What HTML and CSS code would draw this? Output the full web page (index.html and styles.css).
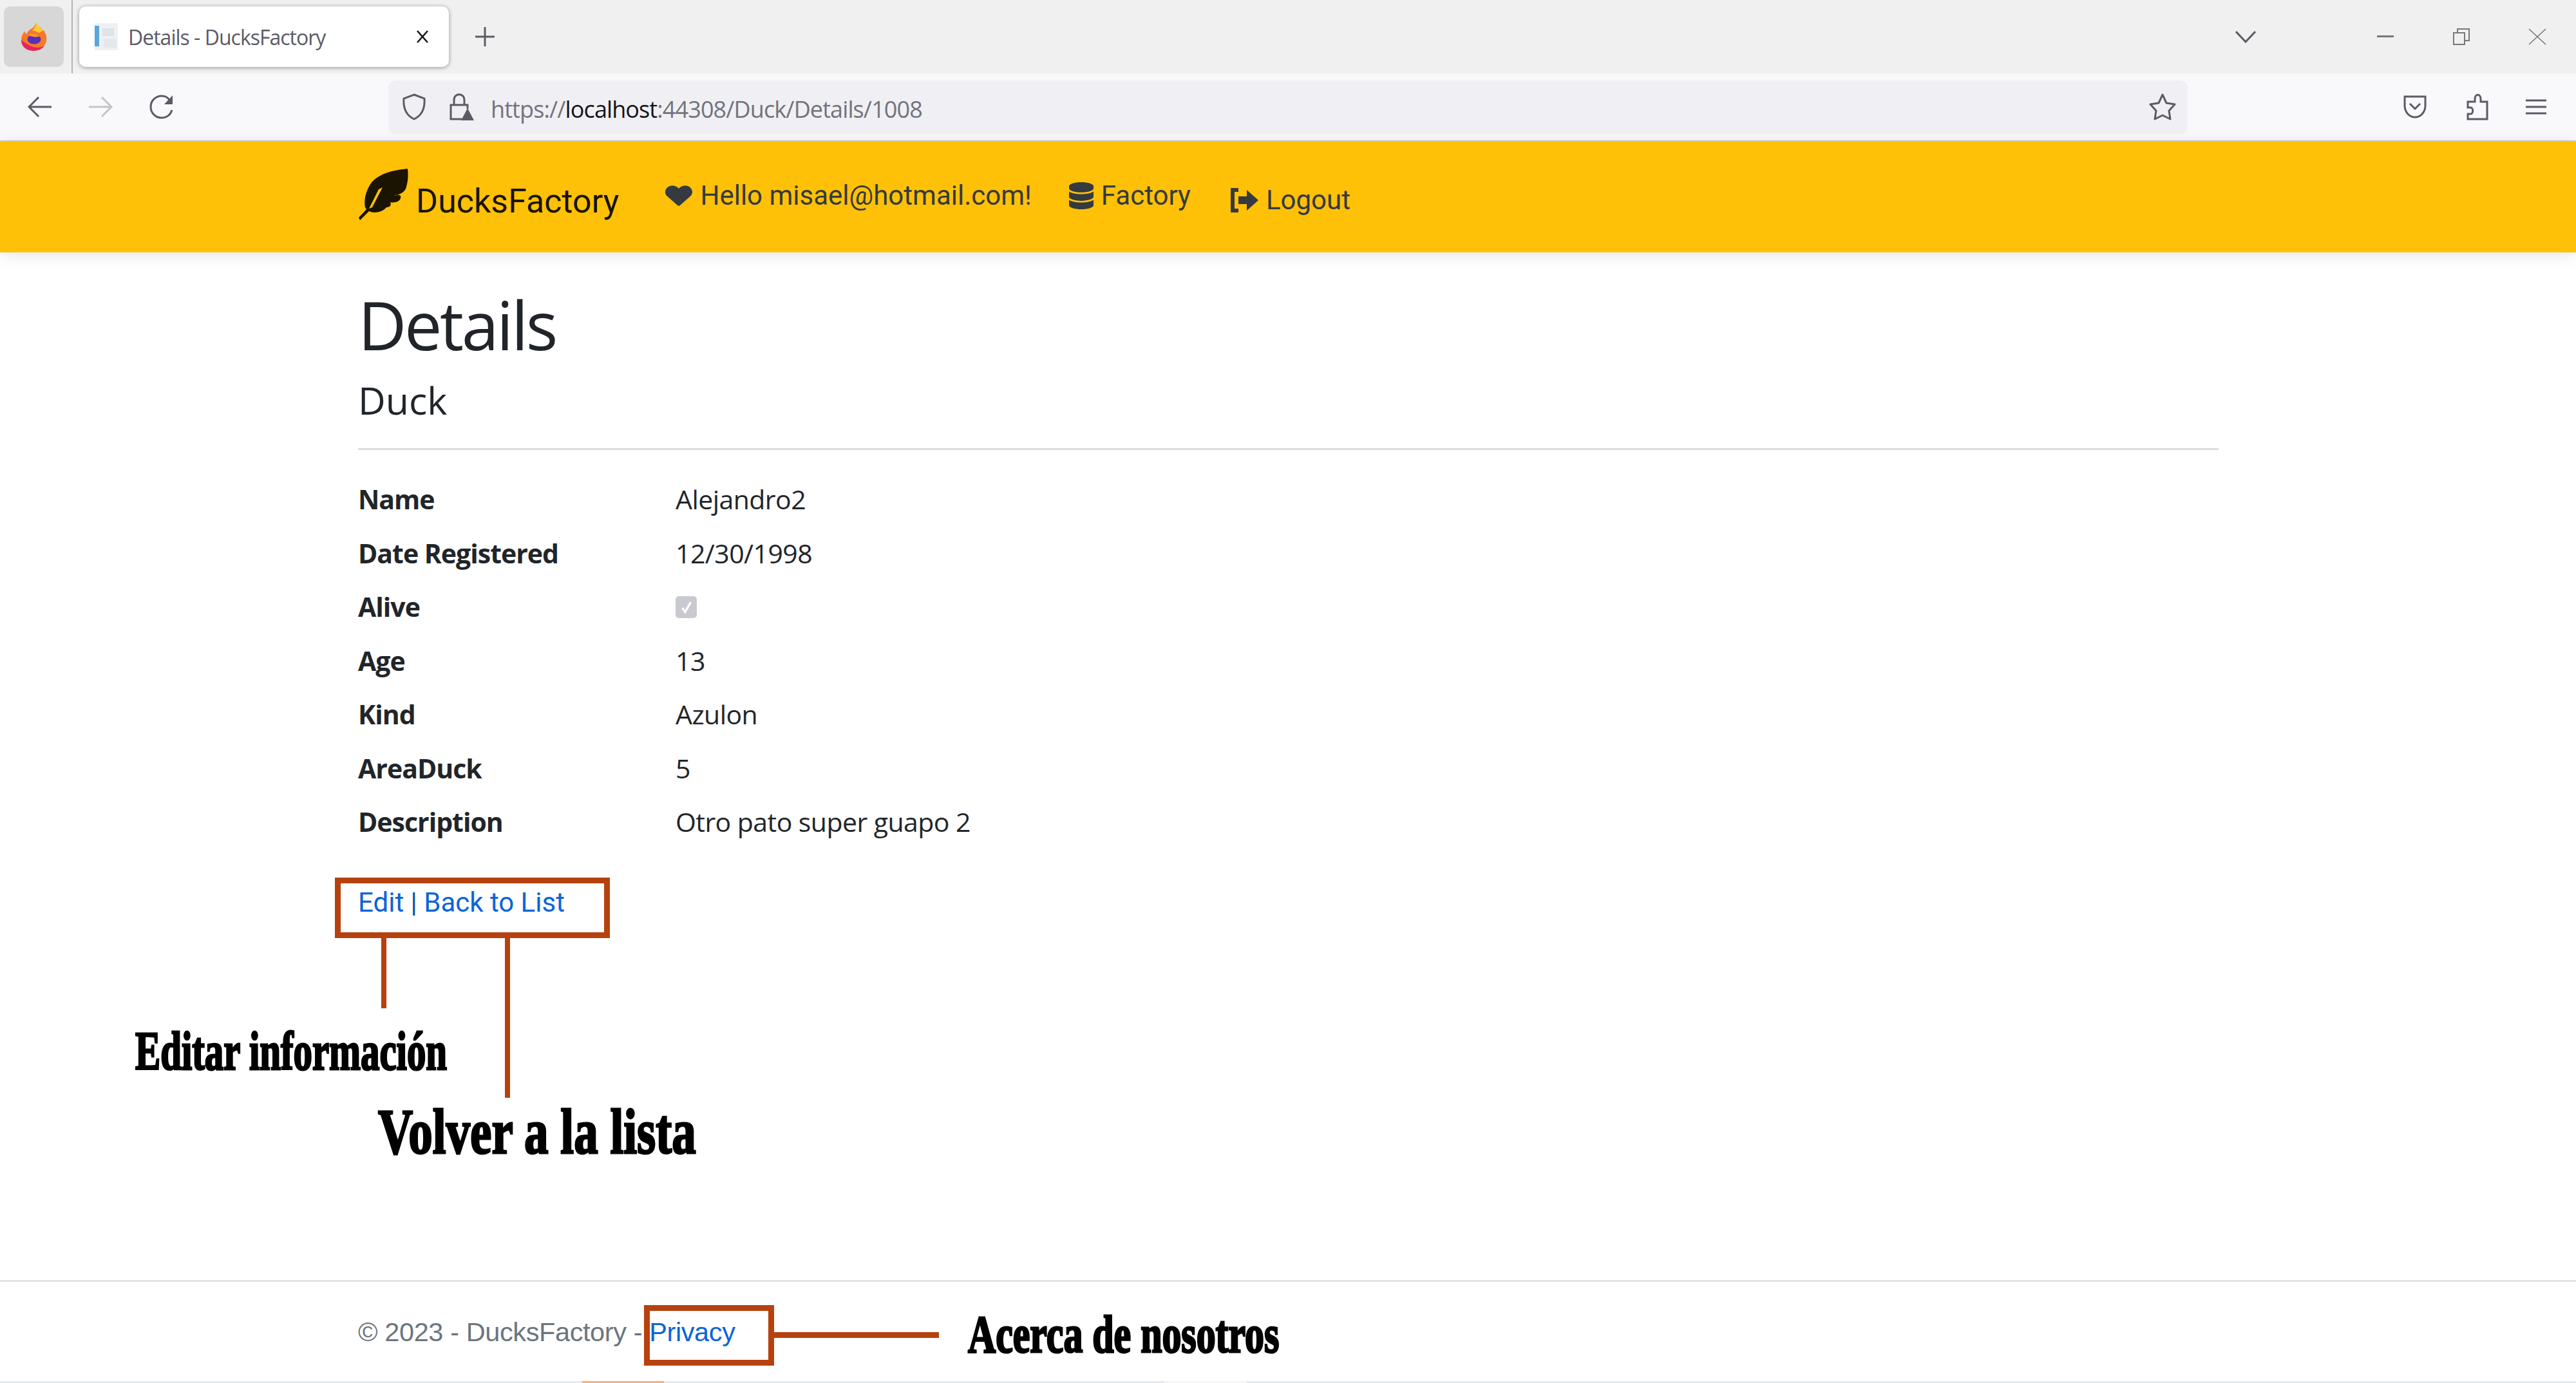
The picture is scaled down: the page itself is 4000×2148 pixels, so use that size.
FILE: index.html
```html
<!DOCTYPE html>
<html lang="en">
<head>
  <meta charset="UTF-8" />
  <title>Details - DucksFactory</title>
  <link rel="stylesheet" href="styles.css">
</head>
<body>
  <div class="tabstrip">
    <div class="ff-button">
      <svg width="40" height="43" viewBox="0 0 42 62" preserveAspectRatio="none">
        <path d="M24 0c3 6 9 10 12 16 5 8 6 17 5 24-2 12-10 22-21 22C8 62 0 52 0 38c0-8 2-15 6-20 0 3 1 5 3 6 1-5 4-9 8-12 3-3 6-7 7-12z" fill="#f5792a"/>
        <path d="M24 0c3 6 9 10 12 16l-7 6c-3-3-7-5-11-5 3-5 6-10 6-17z" fill="#ffc93a"/>
        <path d="M0 38c0 14 8 24 20 24 8 0 14-4 18-11-5 4-14 5-21 1C9 47 4 42 0 38z" fill="#e3265f"/>
        <circle cx="21" cy="36" r="11" fill="#5b2fb5"/>
        <path d="M13 25c6-3 14-1 17 5l-8 1-9-3z" fill="#ff9a2e"/>
      </svg>
    </div>
    <div class="strip-divider"></div>
    <div class="tab">
      <svg class="favicon" width="40" height="42" viewBox="0 0 40 42">
        <rect x="2" y="0" width="36" height="42" fill="#eef1f4"/>
        <rect x="2" y="4" width="7" height="32" fill="#5aa6dc"/>
        <rect x="14" y="8" width="18" height="12" fill="#dfe3e8"/>
        <rect x="16" y="24" width="20" height="14" fill="#e4e8ec"/>
      </svg>
      <span class="tab-title">Details - DucksFactory</span>
      <svg class="tab-close" width="22" height="22" viewBox="0 0 22 22">
        <path d="M3 2l16 18M19 2L3 20" stroke="#15141a" stroke-width="2.6" fill="none"/>
      </svg>
    </div>
    <svg class="new-tab" width="32" height="32" viewBox="0 0 32 32">
      <path d="M16 1v30M1 16h30" stroke="#5b5b66" stroke-width="3" fill="none"/>
    </svg>
    <div class="strip-right">
      <svg class="tab-list" width="32" height="20" viewBox="0 0 32 20">
        <path d="M1 2l15 16L31 2" stroke="#5b5b66" stroke-width="3" fill="none"/>
      </svg>
      <div class="win-controls">
        <svg width="26" height="4" viewBox="0 0 26 4"><rect width="26" height="3" fill="#77777c"/></svg>
        <svg width="26" height="26" viewBox="0 0 26 26">
          <path d="M7 6V1h18v18h-6M1 7h17v18H1z" stroke="#77777c" stroke-width="2" fill="none"/>
        </svg>
        <svg width="28" height="26" viewBox="0 0 28 26">
          <path d="M1 1l26 24M27 1L1 25" stroke="#77777c" stroke-width="1.6" fill="none"/>
        </svg>
      </div>
    </div>
  </div>

  <div class="toolbar">
    <div class="tool-buttons">
      <svg width="38" height="32" viewBox="0 0 38 32"><path d="M37 16H3M17 1L2 16l15 15" stroke="#5b5b66" stroke-width="3" fill="none"/></svg>
      <svg width="38" height="32" viewBox="0 0 38 32"><path d="M1 16h34M21 1l15 15-15 15" stroke="#c4c4ca" stroke-width="3" fill="none"/></svg>
      <svg width="40" height="38" viewBox="0 0 40 38"><path d="M33 10C30 4 25 2 20 2 10 2 3 10 3 19s7 17 17 17c8 0 14-5 16-12" stroke="#5b5b66" stroke-width="3" fill="none"/><path d="M37 1v14H24z" fill="#5b5b66"/></svg>
    </div>
    <div class="urlbar">
      <svg class="url-shield" width="38" height="42" viewBox="0 0 38 42"><path d="M19 2l16 6c1 14-3 26-16 32C6 34 2 22 3 8z" stroke="#5b5b66" stroke-width="3" fill="none"/></svg>
      <svg class="url-lock" width="40" height="42" viewBox="0 0 40 42"><path d="M8 18V10c0-11 16-11 16 0v8M20 40H3V18h26v6" stroke="#5b5b66" stroke-width="3" fill="none"/><path d="M29 23l10 19H19z" fill="#5b5b66"/></svg>
      <span class="url-text">https://<b class="url-host">localhost</b>:44308/Duck/Details/1008</span>
      <svg class="url-star" width="42" height="42" viewBox="0 0 42 42"><path d="M21 2l6 13 13 2-9 10 2 13-12-6-12 6 2-13-9-10 13-2z" stroke="#5b5b66" stroke-width="3" stroke-linejoin="round" fill="none"/></svg>
    </div>
    <div class="tool-right">
      <svg width="38" height="36" viewBox="0 0 38 36"><path d="M3 2h32v14c0 10-7 18-16 18S3 26 3 16zM11 13l8 8 8-8" stroke="#5b5b66" stroke-width="3" fill="none"/></svg>
      <svg width="36" height="42" viewBox="0 0 36 42"><path d="M15 9c0-9 9-9 9 0v4h10v27H4v-8h4c5 0 5-10 0-10H4v-9h11z" stroke="#5b5b66" stroke-width="3" fill="none"/></svg>
      <svg width="32" height="26" viewBox="0 0 32 26"><path d="M0 3h32M0 13h32M0 23h32" stroke="#5b5b66" stroke-width="3" fill="none"/></svg>
    </div>
  </div>

  <nav class="navbar">
    <a class="brand">
      <svg class="brand-icon" width="80" height="80" viewBox="0 0 80 80">
        <path fill-rule="evenodd" d="M77 0C55 2 28 8 18 26 11 38 9 50 11 60l2 3L1 76l2 4 14-14c7 4 21 2 27-6 6 0 8-4 6-8 8 2 18-2 16-10-4-2-8-1-10 0 12-2 18-8 19-14 3-10 3-20 2-28zM38 29L22 60l-5 2 15-30z" fill="#1a1400"/>
      </svg>
      <span class="brand-name">DucksFactory</span>
    </a>
    <a class="nav-item nav-hello">
      <svg width="42" height="36" viewBox="0 0 512 512" preserveAspectRatio="none"><path d="M462.3 62.6C407.5 15.9 326 24.3 275.7 76.2L256 96.5l-19.7-20.3C186.1 24.3 104.5 15.9 49.7 62.6c-62.8 53.6-66.1 149.8-9.9 207.9l193.5 199.8c12.5 12.9 32.8 12.9 45.3 0l193.5-199.8c56.3-58.1 53-154.3-9.8-207.9z"/></svg>
      Hello misael@hotmail.com!
    </a>
    <a class="nav-item nav-factory">
      <svg width="38" height="42" viewBox="0 0 448 512" preserveAspectRatio="none"><path d="M448 73.143v45.714C448 159.143 347.667 192 224 192S0 159.143 0 118.857V73.143C0 32.857 100.333 0 224 0s224 32.857 224 73.143zM448 176v102.857C448 319.143 347.667 352 224 352S0 319.143 0 278.857V176c48.125 33.143 136.208 48.572 224 48.572S399.874 209.143 448 176zm0 160v102.857C448 479.143 347.667 512 224 512S0 479.143 0 438.857V336c48.125 33.143 136.208 48.572 224 48.572S399.874 369.143 448 336z"/></svg>
      Factory
    </a>
    <a class="nav-item nav-logout">
      <svg width="43" height="38" viewBox="0 0 43 38"><path d="M12 3H3v32h9" stroke="#343a40" stroke-width="6" fill="none"/><path d="M12 13h13V3l18 16-18 16V25H12z"/></svg>
      Logout
    </a>
  </nav>

  <main class="content">
    <h1 class="page-title">Details</h1>
    <h4 class="page-sub">Duck</h4>
    <hr class="rule">
    <dl class="details">
      <dt>Name</dt><dd>Alejandro2</dd>
      <dt>Date Registered</dt><dd>12/30/1998</dd>
      <dt>Alive</dt><dd><span class="check"><svg width="26" height="26" viewBox="0 0 24 24"><path d="M6 13l4 6 8-14" stroke="#fff" stroke-width="3" fill="none"/></svg></span></dd>
      <dt>Age</dt><dd>13</dd>
      <dt>Kind</dt><dd>Azulon</dd>
      <dt>AreaDuck</dt><dd>5</dd>
      <dt>Description</dt><dd>Otro pato super guapo 2</dd>
    </dl>
    <div class="actions"><a>Edit</a> | <a>Back to List</a></div>
  </main>

  <footer class="footer">
    <span class="copy">&copy; 2023 - DucksFactory - <a>Privacy</a></span>
  </footer>
  <div class="taskbar-edge"><span class="edge-orange"></span><span class="edge-pale"></span></div>

  <!-- anotaciones encima de la captura -->
  <div class="note-box note-box-edit"></div>
  <div class="note-line note-line-edit"></div>
  <div class="note-line note-line-back"></div>
  <div class="note-text note-edit">Editar información</div>
  <div class="note-text note-back">Volver a la lista</div>
  <div class="note-box note-box-privacy"></div>
  <div class="note-line note-line-privacy"></div>
  <div class="note-text note-privacy">Acerca de nosotros</div>
</body>
</html>
```

FILE: styles.css
```css
* {
  box-sizing: border-box;
}

html, body {
  margin: 0;
  height: 2148px;
  overflow: hidden;
}

body {
  position: relative;
  display: flex;
  flex-direction: column;
  background: #fff;
  color: #212529;
  font-family: 'Open Sans', 'Noto Sans', sans-serif;
}

a {
  text-decoration: none;
}

/* tab strip */
.tabstrip {
  height: 114px;
  background: #f0f0f0;
  display: flex;
  align-items: center;
  padding-left: 6px;
  flex-shrink: 0;
}

.ff-button {
  width: 93px;
  height: 94px;
  background: #d7d7d7;
  border-radius: 10px;
  display: flex;
  align-items: center;
  justify-content: center;
}

.strip-divider {
  width: 2px;
  height: 114px;
  background: #b4b4b8;
  margin-left: 12px;
}

.tab {
  width: 574px;
  height: 94px;
  margin-left: 10px;
  background: #fff;
  border-radius: 10px;
  box-shadow: 0 1px 6px rgba(0, 0, 0, 0.4);
  display: flex;
  align-items: center;
  padding-left: 22px;
}

.tab-title {
  margin-left: 14px;
  font-size: 32px;
  color: #5b5b66;
  letter-spacing: -1px;
  white-space: nowrap;
}

.tab-close {
  margin-left: auto;
  margin-right: 30px;
}

.new-tab {
  margin-left: 40px;
}

.strip-right {
  margin-left: auto;
  display: flex;
  align-items: center;
}

.tab-list {
  margin-right: 188px;
}

.win-controls {
  width: 309px;
  padding-right: 46px;
  display: flex;
  align-items: center;
  justify-content: space-between;
}

/* toolbar */
.toolbar {
  height: 106px;
  background: #f9f9fb;
  border-bottom: 2px solid #ccc;
  display: flex;
  align-items: center;
  padding-left: 43px;
  flex-shrink: 0;
}

.tool-buttons {
  width: 560px;
  display: flex;
  gap: 56px;
  align-items: center;
}

.urlbar {
  width: 2794px;
  height: 83px;
  background: #f0f0f4;
  border-radius: 12px;
  display: flex;
  align-items: center;
  padding-left: 21px;
}

.url-lock {
  margin-left: 35px;
}

.url-text {
  margin-left: 25px;
  font-size: 36px;
  color: #73737c;
  white-space: nowrap;
  letter-spacing: -0.9px;
  padding-top: 6px;
}

.url-host {
  font-weight: 400;
  color: #15141a;
}

.url-star {
  margin-left: auto;
  margin-right: 18px;
}

.tool-right {
  flex: 1;
  display: flex;
  align-items: center;
  justify-content: space-between;
  padding-left: 334px;
  padding-right: 46px;
}

/* nav */
.navbar {
  height: 172px;
  background: #ffc107;
  box-shadow: 0 4px 24px rgba(0, 0, 0, 0.1);
  display: flex;
  align-items: flex-start;
  padding-left: 556px;
  color: #343a40;
  flex-shrink: 0;
  z-index: 1;
}

.brand {
  display: flex;
  align-items: flex-start;
  margin-top: 42px;
  color: #1a1400;
}

.brand-name {
  font-family: 'Roboto', sans-serif;
  font-size: 52px;
  margin-left: 10px;
  margin-top: 20px;
}

.nav-item {
  display: flex;
  align-items: center;
  font-family: 'Roboto', sans-serif;
  font-size: 42px;
  color: #343a40;
  white-space: nowrap;
}

.nav-item svg {
  fill: #343a40;
  margin-right: 12px;
}

.nav-hello {
  margin-left: 72px;
  margin-top: 59px;
}

.nav-factory {
  margin-left: 58px;
  margin-top: 59px;
}

.nav-logout {
  margin-left: 62px;
  margin-top: 66px;
}

/* content */
.content {
  flex: 1;
  padding: 32px 555px 0 556px;
}

.page-title {
  margin: 0;
  font-size: 104px;
  font-weight: 400;
  letter-spacing: -3.4px;
  line-height: 160px;
}

.page-sub {
  margin: 0;
  font-size: 59px;
  font-weight: 400;
  line-height: 74px;
}

.rule {
  border: 0;
  border-top: 3px solid #dcdcdc;
  margin: 38px 0 35px;
}

.details {
  display: grid;
  grid-template-columns: 493px 1fr;
  grid-auto-rows: 83.5px;
  margin: 0;
  font-size: 41px;
  line-height: 83.5px;
}

.details dt {
  font-weight: 700;
  letter-spacing: -1px;
}

.details dd {
  margin: 0;
  letter-spacing: -0.55px;
}

.check {
  display: inline-flex;
  vertical-align: middle;
  width: 33px;
  height: 34px;
  margin-bottom: 8px;
  background: #c9cacf;
  border-radius: 5px;
  align-items: center;
  justify-content: center;
}

.actions {
  margin-top: 53px;
  font-family: 'Roboto', sans-serif;
  font-size: 42px;
  line-height: 60px;
  color: #0b4fa8;
}

.actions a, .footer a {
  color: #0b64d8;
}

/* footer */
.footer {
  height: 157px;
  border-top: 3px solid #e1e3e8;
  padding: 54px 0 0 556px;
  font-family: 'Liberation Sans', sans-serif;
  font-size: 41.5px;
  letter-spacing: -0.4px;
  color: #6c757d;
  flex-shrink: 0;
}

.taskbar-edge {
  height: 3px;
  background: #e6ebf0;
  position: relative;
  flex-shrink: 0;
}

.edge-orange, .edge-pale {
  position: absolute;
  top: 0;
  height: 3px;
  width: 127px;
}

.edge-orange {
  left: 904px;
  background: #f4b183;
}

.edge-pale {
  left: 1808px;
  background: #f6f6f6;
}

/* anotaciones */
.note-box {
  position: absolute;
  border: 9px solid #b7410e;
}

.note-box-edit {
  left: 520px;
  top: 1363px;
  width: 427px;
  height: 94px;
}

.note-box-privacy {
  left: 1000px;
  top: 2027px;
  width: 202px;
  height: 94px;
}

.note-line {
  position: absolute;
  background: #b7410e;
}

.note-line-edit {
  left: 592px;
  top: 1457px;
  width: 8px;
  height: 109px;
}

.note-line-back {
  left: 784px;
  top: 1457px;
  width: 8px;
  height: 248px;
}

.note-line-privacy {
  left: 1202px;
  top: 2069px;
  width: 256px;
  height: 9px;
}

.note-text {
  position: absolute;
  font-family: 'Liberation Serif', serif;
  font-weight: 700;
  color: #000;
  white-space: nowrap;
  transform-origin: left top;
  -webkit-text-stroke: 3px #000;
}

.note-edit {
  left: 210px;
  top: 1588px;
  font-size: 84px;
  line-height: 90px;
  transform: scaleX(0.7);
}

.note-back {
  left: 587px;
  top: 1703px;
  font-size: 100px;
  line-height: 110px;
  transform: scaleX(0.75);
}

.note-privacy {
  left: 1503px;
  top: 2028px;
  font-size: 82px;
  line-height: 90px;
  transform: scaleX(0.73);
}
```
